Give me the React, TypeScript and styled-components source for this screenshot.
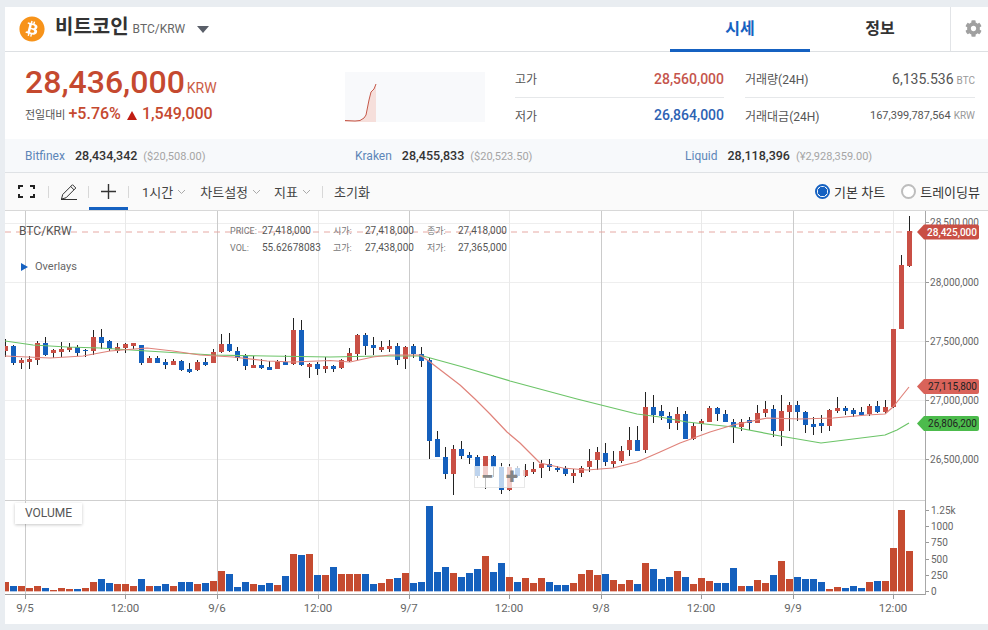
import React from 'react';
import styled, { createGlobalStyle } from 'styled-components';
import { FaBitcoin, FaCog } from 'react-icons/fa';

const Global = createGlobalStyle`
  html, body { margin: 0; padding: 0; background: #e9edf1; }
  body { font-family: Roboto, "Noto Sans CJK KR", sans-serif; color: #333; }
`;

const Page = styled.div`
  width: 988px; height: 630px; box-sizing: border-box; padding: 7px 0 6px 5px; overflow: hidden;
`;
const Shell = styled.div`
  background: #fff; height: 617px; display: flex; flex-direction: column;
`;
const Header = styled.header`
  height: 45px; box-sizing: border-box; border-bottom: 1px solid #dde0e3; display: flex; align-items: stretch; flex: none;
`;
const Coin = styled.div`
  display: flex; align-items: center; padding-left: 14px; flex: 1; color: #f7931a;
`;
const CoinName = styled.strong`
  font-size: 20px; font-weight: 700; color: #333; margin-left: 10px; line-height: 24px; position: relative; top: -2px;
`;
const CoinPair = styled.span`
  font-size: 12px; color: #666; margin-left: 4px; position: relative; top: 0;
`;
const Caret = styled.i`
  width: 0; height: 0; border: 6.5px solid transparent; border-top: 7px solid #5a5f69; border-bottom: 0; margin-left: 12px; position: relative; top: 0;
`;
const Tab = styled.div<{ $active?: boolean }>`
  width: 140px; display: flex; align-items: center; justify-content: center; box-sizing: border-box;
  font-size: 16px; font-weight: 700; padding-bottom: 2px; margin-bottom: -1px;
  color: ${p => (p.$active ? '#1561c1' : '#333')};
  border-bottom: 3px solid ${p => (p.$active ? '#1561c1' : 'transparent')};
`;
const GearCell = styled.div`
  width: 38px; border-left: 1px solid #e2e4e7; display: flex; align-items: center; justify-content: center; color: #a0a0a0; font-size: 17px; padding: 0 0 1px 7px; box-sizing: border-box;
`;
const Stats = styled.section`
  height: 87px; flex: none; display: flex; box-sizing: border-box; padding-left: 20px;
`;
const PriceBlock = styled.div`
  width: 320px; flex: none; padding-top: 12px; box-sizing: border-box;
`;
const PriceLine = styled.div`
  display: flex; align-items: baseline; color: #c5492f; line-height: 36px;
`;
const BigPrice = styled.span`
  font-size: 32px; font-weight: 500;
`;
const Unit = styled.span`
  font-size: 14px; margin-left: 2px; color: #cb5b45;
`;
const Change = styled.div`
  display: flex; align-items: baseline; color: #c5492f; font-size: 16px; font-weight: 500; line-height: 20px; margin-top: -2px;
`;
const ChangeLabel = styled.span`
  font-size: 11px; font-weight: 400; color: #555; margin-right: 3px;
`;
const Triangle = styled.i`
  width: 0; height: 0; border: 5px solid transparent; border-bottom: 9px solid #c01c12; border-top: 0; margin: 0 5px 0 6px; align-self: center;
`;
const Spark = styled.svg`
  width: 140px; height: 50px; margin-top: 20px; flex: none; background: #f8f9fb; display: block;
`;
const Table = styled.div`
  margin-left: 30px; width: 460px; display: grid; grid-template-columns: 209px 230px; column-gap: 21px; grid-template-rows: 38px 36px; padding-top: 8px;
`;
const Cell = styled.div<{ $first?: boolean }>`
  display: flex; justify-content: space-between; align-items: center; font-size: 12px; color: #555; box-sizing: border-box;
  ${p => (p.$first ? 'border-bottom: 1px solid #e6e8ea;' : 'padding-bottom: 2px;')}
`;
const Val = styled.span<{ $c?: string; $s?: number; $w?: number }>`
  color: ${p => p.$c || '#555'}; font-size: ${p => p.$s || 14}px; font-weight: ${p => p.$w || 400};
`;
const Small = styled.small`
  font-size: 10px; color: #999; margin-left: 3px;
`;
const Exch = styled.section`
  height: 34px; flex: none; box-sizing: border-box; background: #f7f9fb; border-bottom: 1px solid #dfe2e5; padding-left: 20px;
  display: grid; grid-template-columns: repeat(3, 330px); align-items: center; font-size: 12px;
`;
const ExItem = styled.div`
  display: flex; align-items: baseline;
`;
const ExName = styled.span`
  color: #5d86b8; margin-right: 10px;
`;
const ExVal = styled.span`
  color: #333; font-weight: 500; margin-right: 6px; font-size: 12.5px;
`;
const ExSub = styled.span`
  color: #a5a5a5; font-size: 11px;
`;
const Toolbar = styled.nav`
  height: 38px; flex: none; box-sizing: border-box; background: #fafafa; border-bottom: 1px solid #d8d8d8; display: flex; align-items: center; font-size: 13px; color: #444;
`;
const IconBtn = styled.div<{ $w: number; $active?: boolean }>`
  width: ${p => p.$w}px; height: 37px; box-sizing: border-box; display: flex; align-items: center; justify-content: center; flex: none; position: relative;
  ${p => (p.$active ? 'border-bottom: 3px solid #1561c1; padding-top: 3px;' : '')}
  color: #333;
`;
const Sep = styled.i`
  width: 1px; height: 12px; background: #d8d8d8; flex: none;
`;
const Menu = styled.div<{ $ml: number }>`
  margin-left: ${p => p.$ml}px; display: flex; align-items: center; gap: 4px; flex: none;
`;
const Grow = styled.div`
  flex: 1;
`;
const Radio = styled.label<{ $on?: boolean }>`
  display: flex; align-items: center; margin-right: ${p => (p.$on ? 16 : 8)}px; color: #333;
  &::before {
    content: ''; width: 15px; height: 15px; border-radius: 50%; box-sizing: border-box; margin-right: 4px;
    border: ${p => (p.$on ? '2px solid #1561c1' : '2px solid #bdbdbd')};
    background: ${p => (p.$on ? 'radial-gradient(circle, #1561c1 0 4.5px, #fff 5px)' : '#fff')};
  }
`;
const ChartWrap = styled.section`
  position: relative; flex: 1; overflow: hidden;
`;
const ChartSvg = styled.svg`
  display: block; width: 983px; height: 413px;
`;
const PairTag = styled.div`
  position: absolute; left: 14px; top: 13px; font-size: 12px; color: #555;
`;
const Overlays = styled.div`
  position: absolute; left: 16px; top: 49px; font-size: 11px; color: #666; display: flex; align-items: center; gap: 7px;
  &::before { content: ''; border: 4px solid transparent; border-left: 7px solid #1561c1; border-right: 0; }
`;
const Legend = styled.div`
  position: absolute; left: 225px; top: 11px; display: grid; grid-template-columns: 32px 71px 32px 62px 31px 60px; grid-auto-rows: 17px; align-items: center; font-size: 10px; color: #555;
`;
const LegendKey = styled.span`
  color: #777; font-size: 9px;
`;
const VolumeTag = styled.div`
  position: absolute; left: 10px; top: 292px; width: 67px; height: 21px; box-sizing: border-box; padding-left: 10px; line-height: 20px; font-size: 12px; color: #555; background: #fff; box-shadow: 0 1px 3px rgba(0,0,0,.22);
`;
const ZoomCtl = styled.div`
  position: absolute; left: 469px; top: 255px; width: 51px; height: 22px; box-sizing: border-box; background: rgba(255,255,255,.72); border: 1px solid rgba(210,210,210,.5); border-top: 0; display: flex; align-items: center; justify-content: space-around; color: #858585; font-size: 22px; font-weight: 900; line-height: 20px;
`;

type C = [number, number, number, number, number];
// colour (1 red, 0 blue), body top, body bottom, wick top, wick bottom
const candles: C[] = [
[1,346,351,339,357],[0,346,363,345,365],[1,360,363,358,369],[1,359,362,356,369],[1,343,360,341,365],[0,343,355,337,356],[1,350,353,349,358],[1,349,352,342,357],[1,347,350,343,352],[0,347,353,345,356],
[0,350,351,349,357],[1,337,351,330,355],[0,337,343,329,349],[0,341,349,340,351],[1,347,351,343,353],[1,344,348,343,353],[1,343,346,343,349],[0,345,363,345,365],[1,358,363,356,363],[0,358,363,356,363],
[0,362,365,359,369],[1,361,365,359,365],[0,361,370,360,371],[0,369,372,363,373],[1,362,370,360,371],[0,362,365,358,366],[1,352,363,349,363],[1,344,352,334,353],[0,344,351,333,352],[0,351,358,347,361],
[0,356,366,354,370],[1,365,368,356,368],[0,365,368,359,369],[0,367,370,361,370],[1,362,369,360,369],[0,362,365,355,365],[1,330,364,318,365],[0,330,365,320,366],[1,364,367,363,378],[0,364,369,362,375],
[1,366,369,357,373],[0,366,369,365,372],[1,360,368,359,369],[1,353,361,348,362],[1,335,354,334,360],[0,335,346,333,355],[0,345,348,337,355],[1,347,350,341,352],[1,346,349,340,352],[0,346,360,343,365],
[1,347,359,346,369],[0,346,354,344,358],[0,354,361,347,367],[0,360,441,358,459],[0,439,457,431,457],[0,457,474,447,479],[1,449,474,445,495],[0,449,456,441,459],[0,455,458,452,464],[0,457,476,455,478],
[1,456,476,456,489],[0,456,467,455,477],[0,467,490,463,494],[1,467,490,464,491],[0,468,476,466,477],[1,470,476,464,477],[1,469,472,462,474],[1,464,468,460,478],[0,464,467,459,471],[0,468,470,466,472],
[0,468,474,466,476],[1,473,476,469,483],[1,468,473,466,477],[1,461,467,449,472],[1,452,460,447,470],[0,453,462,443,466],[1,461,464,451,468],[1,451,461,446,463],[1,440,450,427,456],[0,440,451,426,451],
[1,407,450,392,453],[0,407,415,395,423],[0,411,416,405,420],[0,416,423,412,429],[1,414,423,407,430],[0,414,439,411,439],[1,426,439,423,440],[1,421,424,419,431],[1,408,422,406,422],[0,408,414,407,421],
[0,414,422,410,422],[0,422,427,419,443],[1,422,427,419,431],[0,420,423,417,430],[1,413,423,405,423],[1,409,413,401,417],[0,409,431,405,437],[1,411,431,395,446],[1,405,412,402,431],[0,405,412,401,421],
[0,412,425,411,433],[0,424,427,417,435],[0,423,426,415,433],[1,410,426,409,431],[1,408,411,397,413],[0,408,411,406,415],[0,410,414,408,417],[0,412,415,407,416],[1,406,414,404,416],[0,406,412,401,413],
[1,407,412,400,413],[1,329,407,329,408],[1,265,329,255,329],[1,231,266,216,267],
];
const vols: [number, number][] = [
[1,276],[0,288],[1,288],[1,294],[1,288],[0,294],[1,300],[1,294],[1,297],[0,297],[1,294],[1,276],[0,267],[0,279],[1,282],[1,282],[1,288],[0,267],[1,288],[0,288],
[0,282],[1,288],[0,276],[0,276],[1,282],[0,279],[1,273],[1,243],[0,252],[0,291],[0,276],[1,282],[0,285],[0,279],[1,285],[0,258],[1,192],[0,195],[1,192],[0,255],
[1,255],[0,231],[1,252],[1,252],[1,252],[0,252],[0,282],[1,279],[1,267],[0,264],[1,249],[0,279],[0,276],[0,48],[0,246],[0,231],[1,249],[0,261],[0,249],[0,237],
[1,198],[0,246],[0,219],[1,261],[0,276],[1,264],[1,279],[1,264],[0,276],[0,285],[0,285],[1,279],[1,252],[1,240],[1,255],[0,252],[1,270],[1,282],[1,270],[0,282],
[1,219],[0,237],[0,267],[0,261],[1,243],[0,261],[1,282],[1,264],[1,273],[0,279],[0,279],[0,234],[1,288],[0,288],[1,270],[1,279],[0,255],[1,213],[1,267],[0,261],
[0,267],[0,267],[0,276],[1,297],[1,291],[0,294],[0,288],[0,294],[1,276],[0,273],[1,273],[1,174],[1,60],[1,183],
];
const redMa = '5,356 50,358 83,356 110,351 147,348 173,351 200,355 233,357 267,361 293,362 330,360.5 350,362 373,357 390,355 420,355 430,362 447,375 460,385 475,399 490,414 507,432 520,443 540,463 563,468 587,470 613,468 637,462 660,452 680,443 710,432 733,425 767,418 800,419 833,418 867,415 885,414 893,407 909,387';
const greenMa = '5,341 33,345 67,347 100,348 147,351 180,353 213,355 267,356 330,357 380,356 423,356 463,367 510,381 577,399 637,414 660,417 687,422 733,427 780,436 821,443 885,435 897,430 909,423';
const hGrid = [223, 282, 341, 400, 459];
const dayX = [25, 217, 409, 601, 793];
const noonX = [125, 318, 509, 701, 893];
const priceTicks: [string, number][] = [['28,500,000', 222], ['28,000,000', 282], ['27,500,000', 341], ['27,000,000', 400], ['26,500,000', 459]];
const volTicks: [string, number][] = [['1.25k', 510], ['1000', 526], ['750', 542], ['500', 559], ['250', 575], ['0', 591]];
const xLabels: [string, number][] = [['9/5', 25], ['12:00', 125], ['9/6', 217], ['12:00', 318], ['9/7', 409], ['12:00', 509], ['9/8', 601], ['12:00', 701], ['9/9', 793], ['12:00', 893]];
const axisText = { fontFamily: 'Roboto, sans-serif', fontSize: 11.5, fill: '#666' };
const scaleText = { fontFamily: 'Roboto, sans-serif', fontSize: 10, fill: '#666' };

function Badge({ y, fill, text, color, bold }: { y: number; fill: string; text: string; color: string; bold?: boolean }) {
  return (
    <g>
      <path d={`M917 ${y} l7 -7.5 h53 a2 2 0 0 1 2 2 v11 a2 2 0 0 1 -2 2 h-53 z`} fill={fill} />
      <text x="977" y={y + 3.5} textAnchor="end" fontFamily="Roboto, sans-serif" fontSize="10" fontWeight={bold ? 500 : 400} fill={color}>{text}</text>
    </g>
  );
}

function Chart() {
  return (
    <ChartSvg viewBox="5 211 983 413">
      {hGrid.map(y => <rect key={y} x="5" y={y} width="920" height="1" fill="#eeeeee" />)}
      {noonX.map(x => <rect key={x} x={x} y="211" width="1" height="383" fill="#e9e9e9" />)}
      {dayX.map(x => <rect key={x} x={x} y="211" width="1" height="383" fill="#cbcbcb" />)}
      <rect x="5" y="500" width="920" height="1" fill="#cfcfcf" />
      <rect x="5" y="594" width="920" height="1" fill="#9c9c9c" />
      <rect x="925" y="211" width="1" height="384" fill="#a8a8a8" />
      <line x1="5" x2="916" y1="232" y2="232" stroke="#e6a9a4" strokeWidth="1" strokeDasharray="6 5" />
      {candles.map(([c, t, b, wt, wb], i) => (
        <g key={i}>
          <rect x={5 + 8 * i} y={wt} width="1" height={wb - wt} fill="#222" />
          <rect x={3 + 8 * i} y={t} width="5" height={Math.max(b - t, 1)} fill={c ? '#c94f45' : '#1560bd'} />
        </g>
      ))}
      <polyline points={greenMa} fill="none" stroke="#6cc468" strokeWidth="1.2" strokeLinejoin="round" />
      <polyline points={redMa} fill="none" stroke="#e0837b" strokeWidth="1.2" strokeLinejoin="round" />
      {vols.map(([c, z], i) => (
        <rect key={i} x={2 + 8 * i} y={490 + z / 3} width="7" height={(304 - z) / 3} fill={c ? '#c54b30' : '#1560bd'} />
      ))}
      <rect x="0" y="211" width="5" height="400" fill="#e9edf1" />
      {priceTicks.map(([t, y]) => (
        <g key={t}>
          <rect x="926" y={y} width="3" height="1" fill="#999" />
          <text x="979" y={y + 4} textAnchor="end" {...scaleText}>{t}</text>
        </g>
      ))}
      {volTicks.map(([t, y]) => (
        <g key={t}>
          <rect x="926" y={y} width="3" height="1" fill="#999" />
          <text x="931" y={y + 4} {...scaleText}>{t}</text>
        </g>
      ))}
      {xLabels.map(([t, x]) => (
        <g key={x}>
          <rect x={x} y="595" width="1" height="4" fill="#999" />
          <text x={x} y="612" textAnchor="middle" {...axisText}>{t}</text>
        </g>
      ))}
      <Badge y={232} fill="#c94f45" text="28,425,000" color="#fff" bold />
      <Badge y={386.5} fill="#d9635a" text="27,115,800" color="#222" />
      <Badge y={423.5} fill="#4cbb4c" text="26,806,200" color="#222" />
    </ChartSvg>
  );
}

const Chevron = () => (
  <svg width="9" height="6" viewBox="0 0 9 6"><path d="M1 1l3.5 3.5L8 1" fill="none" stroke="#aaa" strokeWidth="1" /></svg>
);

export default function App() {
  return (
    <Page>
      <Global />
      <Shell>
        <Header>
          <Coin>
            <FaBitcoin size={26} />
            <CoinName>비트코인</CoinName>
            <CoinPair>BTC/KRW</CoinPair>
            <Caret />
          </Coin>
          <Tab $active>시세</Tab>
          <Tab>정보</Tab>
          <GearCell><FaCog /></GearCell>
        </Header>
        <Stats>
          <PriceBlock>
            <PriceLine><BigPrice>28,436,000</BigPrice><Unit>KRW</Unit></PriceLine>
            <Change>
              <ChangeLabel>전일대비</ChangeLabel>+5.76%<Triangle />1,549,000
            </Change>
          </PriceBlock>
          <Spark viewBox="345 72 140 50">
            <path d="M345 120.5 L355 121 L360 120.5 L364 118 L366 115 L369 100 L371 92 L374 89 L376 84 V122 H345 Z" fill="#f6dfdb" />
            <polyline points="345,120.5 355,121 360,120.5 364,118 366,115 369,100 371,92 374,89 376,84" fill="none" stroke="#c5594a" strokeWidth="1" />
          </Spark>
          <Table>
            <Cell $first>고가<Val $c="#c5554c" $w={500}>28,560,000</Val></Cell>
            <Cell $first>거래량(24H)<span><Val $s={14}>6,135.536</Val><Small>BTC</Small></span></Cell>
            <Cell>저가<Val $c="#2d62b3" $w={500}>26,864,000</Val></Cell>
            <Cell>거래대금(24H)<span><Val $s={11}>167,399,787,564</Val><Small>KRW</Small></span></Cell>
          </Table>
        </Stats>
        <Exch>
          <ExItem><ExName>Bitfinex</ExName><ExVal>28,434,342</ExVal><ExSub>($20,508.00)</ExSub></ExItem>
          <ExItem><ExName>Kraken</ExName><ExVal>28,455,833</ExVal><ExSub>($20,523.50)</ExSub></ExItem>
          <ExItem><ExName>Liquid</ExName><ExVal>28,118,396</ExVal><ExSub>(¥2,928,359.00)</ExSub></ExItem>
        </Exch>
        <Toolbar>
          <IconBtn $w={43}>
            <svg width="17" height="13" viewBox="0 0 17 13" fill="none" stroke="#222" strokeWidth="2">
              <path d="M1 4V1h4M12 1h4v3M16 9v3h-4M5 12H1V9" />
            </svg>
          </IconBtn>
          <Sep />
          <IconBtn $w={39}>
            <svg width="18" height="18" viewBox="0 0 18 18" fill="none" stroke="#333" strokeWidth="1">
              <path d="M1.5 16l1.2-4.5L12.5 1.7l3.3 3.3L6 14.8z M10.7 3.5l3.3 3.3 M1 16.5h16" />
            </svg>
          </IconBtn>
          <Sep />
          <IconBtn $w={39} $active>
            <svg width="15" height="15" viewBox="0 0 15 15" stroke="#333" strokeWidth="1.4"><path d="M7.5 0v15M0 7.5h15" /></svg>
          </IconBtn>
          <Sep />
          <Menu $ml={13}>1시간<Chevron /></Menu>
          <Menu $ml={14}>차트설정<Chevron /></Menu>
          <Menu $ml={13}>지표<Chevron /></Menu>
          <Menu $ml={11}><Sep /></Menu>
          <Menu $ml={11}>초기화</Menu>
          <Grow />
          <Radio $on>기본 차트</Radio>
          <Radio>트레이딩뷰</Radio>
        </Toolbar>
        <ChartWrap>
          <Chart />
          <PairTag>BTC/KRW</PairTag>
          <Overlays>Overlays</Overlays>
          <Legend>
            <LegendKey>PRICE:</LegendKey><span>27,418,000</span><LegendKey>시가:</LegendKey><span>27,418,000</span><LegendKey>종가:</LegendKey><span>27,418,000</span>
            <LegendKey>VOL:</LegendKey><span>55.62678083</span><LegendKey>고가:</LegendKey><span>27,438,000</span><LegendKey>저가:</LegendKey><span>27,365,000</span>
          </Legend>
          <VolumeTag>VOLUME</VolumeTag>
          <ZoomCtl><span>−</span><span>+</span></ZoomCtl>
        </ChartWrap>
      </Shell>
    </Page>
  );
}
